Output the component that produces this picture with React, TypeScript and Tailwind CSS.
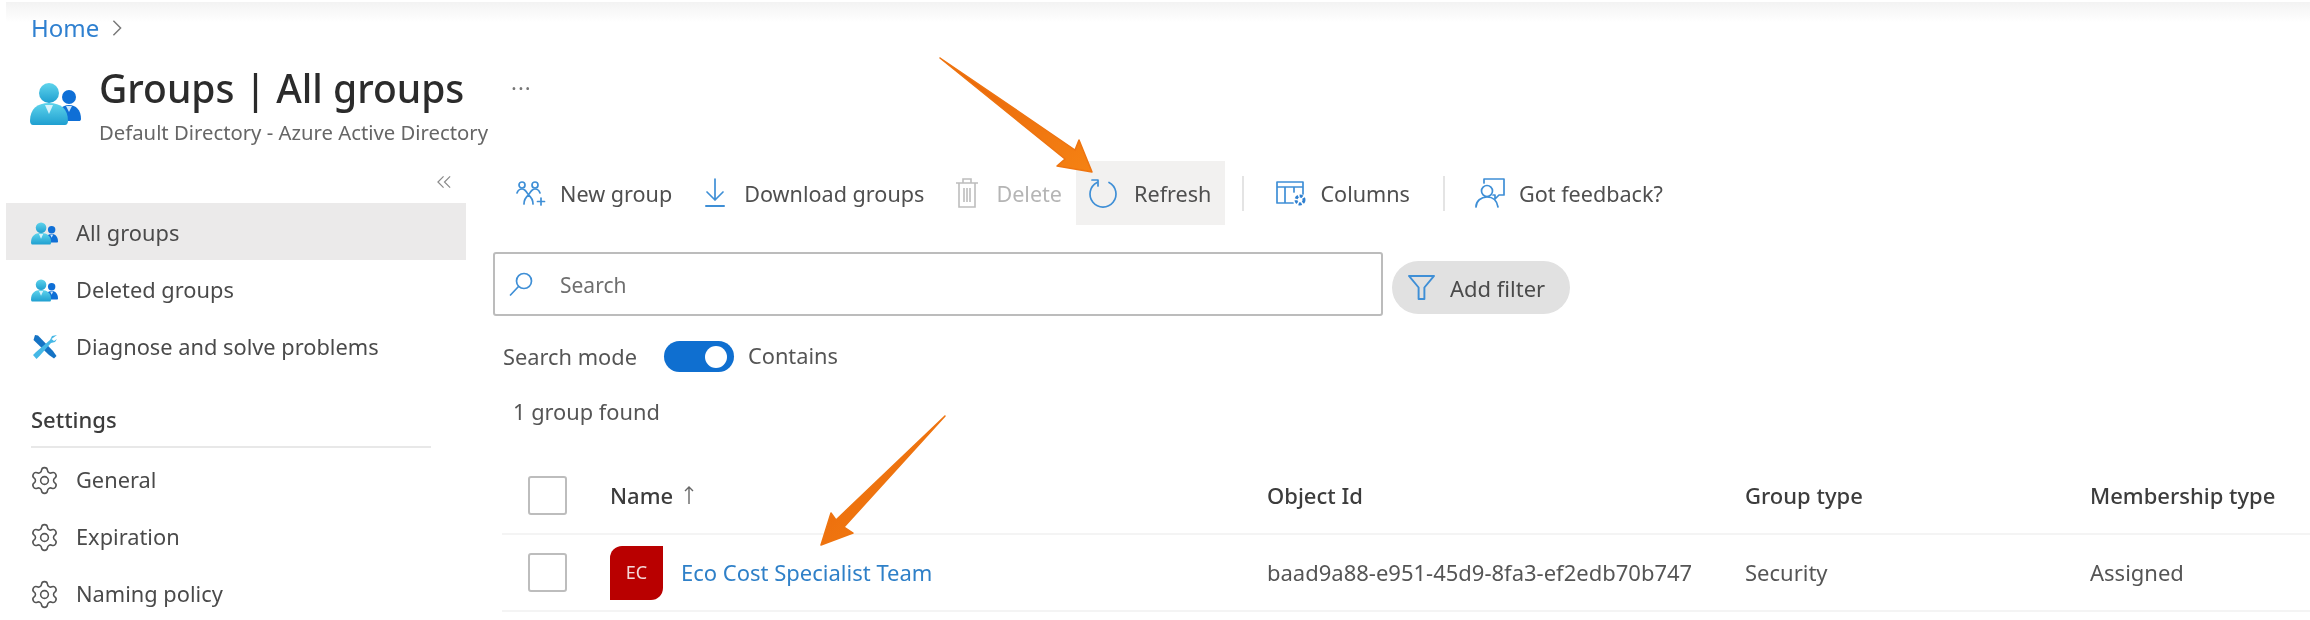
import * as React from "react";
import { Settings } from "lucide-react";

function GroupIcon({ className, id }: { className: string; id: string }) {
  return (
    <svg viewBox="0 0 51 42" className={className} aria-hidden="true">
      <defs>
        <linearGradient id={id} x1="0" y1="0" x2="0" y2="1">
          <stop offset="0" stopColor="#5fd4ec" />
          <stop offset="1" stopColor="#1f9fd0" />
        </linearGradient>
      </defs>
      <circle cx="39" cy="14" r="7" fill="#0f6fd6" />
      <path d="M27 36c0-9 5-14 12-14s12 5 12 14c0 1.500-1 2-2 2H29c-1 0-2-.5-2-2z" fill="#0f6fd6" />
      <path d="M36 23l3 6 3-6z" fill="#cfe6fa" />
      <circle cx="19" cy="10" r="10" fill={`url(#${id})`} />
      <path d="M0 38c0-12 7-18 19-18s19 6 19 18c0 2-1 4-3 4H3c-2 0-3-2-3-4z" fill={`url(#${id})`} />
      <path d="M15 22l4 9 4-9z" fill="#d8f3fb" />
    </svg>
  );
}

function Gear() {
  return <Settings className="h-[31px] w-[31px] shrink-0 text-[#555]" strokeWidth={1.2} aria-hidden="true" />;
}

function WrenchIcon() {
  return (
    <svg viewBox="0 0 26 26" className="h-[26px] w-[26px]" aria-hidden="true">
      <path d="M3 1l3 .5L21 17l3.500 5-2.500 2.500-5-3.500L1.500 6z" fill="#1573c4" />
      <path d="M25 1l-5 1-2 4-14 12-3 3 3.500 4 3-3L19 9l4-1 2-3-3 2-2.500-2z" fill="#45b8e6" />
    </svg>
  );
}

function NavItem({ icon, label, active, className }: { icon: React.ReactNode; label: string; active?: boolean; className?: string }) {
  return (
    <div className={`flex h-[57px] items-center gap-[18px] pl-[25px] pt-[3px] text-[21.8px] text-[#4a4a4a] ${active ? "bg-[#ebeaea]" : ""} ${className ?? ""}`}>
      <span className="flex w-[27px] justify-center">{icon}</span>
      {label}
    </div>
  );
}

function ToolButton({
  icon,
  label,
  disabled,
  className,
}: {
  icon: React.ReactNode;
  label: string;
  disabled?: boolean;
  className?: string;
}) {
  return (
    <div className={`flex h-[64px] items-center gap-[14px] text-[21.6px] ${disabled ? "text-[#b5b5b5]" : "text-[#4f4f4f]"} ${className ?? ""}`}>
      <span className="flex w-[30px] justify-center">{icon}</span>
      <span className="pt-[3px]">{label}</span>
    </div>
  );
}

const iconStroke = { fill: "none", stroke: "#3f8fd6", strokeWidth: 1.7, strokeLinecap: "round" as const, strokeLinejoin: "round" as const };

function Checkbox() {
  return <div className="h-[39px] w-[39px] rounded-[3px] border-2 border-[#bdbdbd] bg-white" />;
}

export default function App() {
  return (
    <div className="relative h-[620px] w-[2310px] overflow-hidden bg-white font-['Noto_Sans',sans-serif] blur-[0.5px]">
      {/* header */}
      <div className="ml-[6px] mt-[2px] flex h-[52px] items-center gap-[12px] bg-gradient-to-b from-[#f3f3f3] via-white via-40% to-white pl-[25px] pb-[1px] text-[24px] text-[#2f80d0]">
        Home
        <svg viewBox="0 0 12 20" className="h-[18px] w-[12px]" aria-hidden="true">
          <path d="M2 2l8 8-8 8" fill="none" stroke="#777" strokeWidth="1.6" />
        </svg>
      </div>
      <div className="flex h-[107px] pl-[30px]">
        <GroupIcon id="bigGroup" className="mt-[29px] h-[42px] w-[51px]" />
        <div className="ml-[18px]">
          <div className="mt-[5px] text-[39px] font-medium leading-[58px] text-[#2b2b2b]">Groups | All groups</div>
          <div className="mt-[2px] text-[20.300px] leading-[26px] text-[#666]">Default Directory - Azure Active Directory</div>
        </div>
        <div className="ml-[23px] mt-[18px] text-[22px] leading-[30px] tracking-[1px] text-[#777]">···</div>
      </div>

      <div className="flex">
        {/* sidebar */}
        <div className="ml-[6px] w-[460px]">
          <div className="flex h-[42px] items-center justify-end pr-[14px]">
            <svg viewBox="0 0 16 14" className="h-[14px] w-[15px]" aria-hidden="true">
              <path d="M7 1L1 7l6 6M14 1L8 7l6 6" fill="none" stroke="#8a8a8a" strokeWidth="1.3" />
            </svg>
          </div>
          <NavItem active icon={<GroupIcon id="navGroupA" className="h-[23px] w-[28px]" />} label="All groups" />
          <NavItem icon={<GroupIcon id="navGroupB" className="h-[23px] w-[28px]" />} label="Deleted groups" />
          <NavItem icon={<WrenchIcon />} label="Diagnose and solve problems" />
          <div className="ml-[25px] mt-[27px] w-[400px] border-b-2 border-[#e8e8e8] pb-[9px] text-[22px] font-medium leading-[36px] text-[#3c3c3c]">
            Settings
          </div>
          <NavItem className="mt-[2px]" icon={<Gear />} label="General" />
          <NavItem icon={<Gear />} label="Expiration" />
          <NavItem icon={<Gear />} label="Naming policy" />
        </div>

        {/* main */}
        <div className="ml-[27px] flex-1">
          <div className="flex items-center pl-[23px]">
            <ToolButton
              label="New group"
              icon={
                <svg viewBox="0 0 30 26" className="h-[26px] w-[30px]" aria-hidden="true">
                  <g {...iconStroke}>
                    <circle cx="6" cy="5" r="3" />
                    <circle cx="19" cy="5" r="3" />
                    <path d="M1 13c1-3 3-4 5-4 3 0 4 2 6.500 6 2.500-4 3.500-6 6.500-6 2 0 4 1 5 4M8 24c0-4 2-7 4.500-9 2.500 2 4.500 5 4.500 9" />
                    <path d="M25 18v7M21.500 21.500h7" />
                  </g>
                </svg>
              }
            />
            <ToolButton
              className="ml-[28px]"
              label="Download groups"
              icon={
                <svg viewBox="0 0 22 30" className="h-[30px] w-[22px]" aria-hidden="true">
                  <g {...iconStroke}>
                    <path d="M11 1v21M3 14l8 8 8-8" />
                    <path d="M2 28h18" strokeWidth="2" />
                  </g>
                </svg>
              }
            />
            <ToolButton
              className="ml-[28px]"
              disabled
              label="Delete"
              icon={
                <svg viewBox="0 0 22 30" className="h-[30px] w-[22px]" aria-hidden="true">
                  <g fill="none" stroke="#bdbdbd" strokeWidth="1.600">
                    <path d="M0 5h22M7 5V1h8v4M3 5v24h16V5" />
                    <path d="M8 10v14M11 10v14M14 10v14" />
                  </g>
                </svg>
              }
            />
            <ToolButton
              className="ml-[14px] gap-[16px] bg-[#f2f1f0] pl-[12px] pr-[14px]"
              label="Refresh"
              icon={
                <svg viewBox="0 0 30 30" className="h-[30px] w-[30px]" aria-hidden="true">
                  <g {...iconStroke}>
                    <path d="M9 4.500A13 13 0 1 0 21 4.500" />
                    <path d="M4 2h6v6" />
                  </g>
                </svg>
              }
            />
            <div className="ml-[17px] h-[35px] w-[2px] bg-[#e4e4e4]" />
            <ToolButton
              className="ml-[32px]"
              label="Columns"
              icon={
                <svg viewBox="0 0 30 26" className="h-[26px] w-[30px]" aria-hidden="true">
                  <g {...iconStroke}>
                    <path d="M27 14V2H1v21h16M1 7h26M9 7v16M18 7v5" />
                  </g>
                  <circle cx="24" cy="20" r="4" fill="none" stroke="#2f80d0" strokeWidth="3" strokeDasharray="3 1.500" />
                </svg>
              }
            />
            <div className="ml-[33px] h-[35px] w-[2px] bg-[#e4e4e4]" />
            <ToolButton
              className="ml-[30px]"
              label="Got feedback?"
              icon={
                <svg viewBox="0 0 30 30" className="h-[30px] w-[30px]" aria-hidden="true">
                  <g {...iconStroke}>
                    <path d="M9 5V1h20v16h-5l-4 4v-4h-2" />
                    <circle cx="12" cy="13" r="5.500" />
                    <path d="M1 29c0-6 5-10 11-10s10 4 11 10" />
                  </g>
                </svg>
              }
            />
          </div>

          <div className="mt-[27px] flex items-start">
            <div className="flex h-[64px] w-[890px] items-center gap-[27px] rounded-[3px] border-2 border-[#bcbcbc] pl-[14px] text-[21px] text-[#6e6e6e]">
              <svg viewBox="0 0 24 24" className="h-[24px] w-[24px]" aria-hidden="true">
                <g {...iconStroke}>
                  <circle cx="15" cy="9" r="7.500" />
                  <path d="M9.500 14.500L1.500 23" />
                </g>
              </svg>
              <span className="pt-[3px]">Search</span>
            </div>
            <div className="ml-[9px] mt-[9px] flex h-[53px] w-[178px] items-center gap-[14px] rounded-full bg-[#e1e1e1] pl-[15px] text-[22px] text-[#4a4a4a]">
              <svg viewBox="0 0 30 28" className="h-[27px] w-[29px]" aria-hidden="true">
                <path d="M2 2h26L18 14v12h-6V14z" fill="none" stroke="#3f8fd6" strokeWidth="2" strokeLinejoin="round" />
              </svg>
              <span className="pt-[1px]">Add filter</span>
            </div>
          </div>

          <div className="mt-[25px] flex h-[31px] items-center pl-[10px] text-[21.800px] text-[#555]">
            <span className="pt-[1px]">Search mode</span>
            <div className="ml-[27px] flex h-[31px] w-[70px] items-center justify-end rounded-full bg-[#0f6fd0] pr-[7px]">
              <div className="h-[22px] w-[22px] rounded-full bg-white" />
            </div>
            <span className="ml-[14px]">Contains</span>
          </div>

          <div className="mt-[25px] pl-[20px] text-[21.800px] leading-[30px] text-[#555]">1 group found</div>

          {/* table */}
          <div className="ml-[9px] mt-[27px]">
            <div className="grid h-[81px] grid-cols-[108px_657px_478px_345px_1fr] items-center border-b-2 border-[#f4f4f4] pt-[3px] text-[22px] font-medium text-[#3c3c3c]">
              <div className="pl-[26px]">
                <Checkbox />
              </div>
              <div className="flex items-center gap-[11px]">
                Name
                <svg viewBox="0 0 10 20" className="h-[20px] w-[10px]" aria-hidden="true">
                  <path d="M5 19V2M1 6l4-4 4 4" fill="none" stroke="#666" strokeWidth="1.400" />
                </svg>
              </div>
              <div>Object Id</div>
              <div>Group type</div>
              <div>Membership type</div>
            </div>
            <div className="grid h-[77px] grid-cols-[108px_657px_478px_345px_1fr] items-center border-b-2 border-[#f4f4f4] text-[22px] text-[#555]">
              <div className="pl-[26px]">
                <Checkbox />
              </div>
              <div className="flex items-center gap-[18px]">
                <div className="flex h-[54px] w-[53px] items-center justify-center rounded-tl-[12px] rounded-br-[12px] bg-[#b90000] text-[18px] text-[#f3d8d8]">
                  EC
                </div>
                <span className="text-[#2f80c8]">Eco Cost Specialist Team</span>
              </div>
              <div>baad9a88-e951-45d9-8fa3-ef2edb70b747</div>
              <div>Security</div>
              <div>Assigned</div>
            </div>
          </div>
        </div>
      </div>

      {/* annotation arrows */}
      <svg viewBox="0 0 2310 620" className="absolute inset-0 h-[620px] w-[2310px]" aria-hidden="true">
        <defs>
          <linearGradient id="arrowFill" x1="0" y1="0" x2="1" y2="1">
            <stop offset="0" stopColor="#e8640a" />
            <stop offset="1" stopColor="#f58213" />
          </linearGradient>
        </defs>
        <path d="M940 58L1075 150 1079 140 1092 172 1057 166 1065 159z" fill="url(#arrowFill)" stroke="#ee7410" strokeWidth="1.500" strokeLinejoin="round" />
        <path d="M945 416L844 527 853 533 821 545 831 513 836 520z" fill="url(#arrowFill)" stroke="#ee7410" strokeWidth="1.500" strokeLinejoin="round" />
      </svg>
    </div>
  );
}
